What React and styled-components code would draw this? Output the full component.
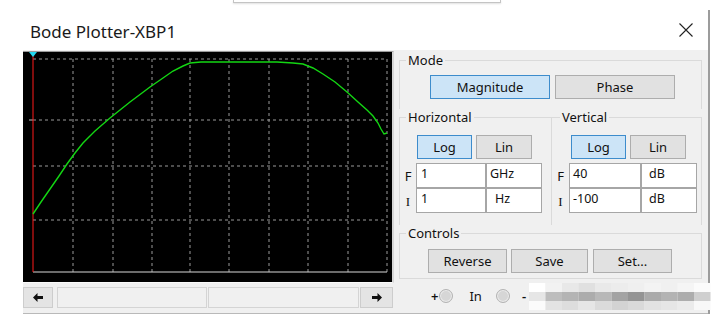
import styled, { createGlobalStyle } from "styled-components";

const Global = createGlobalStyle`
  body {
    margin: 0;
    background: #fff;
    font-family: "Noto Sans", "Open Sans", sans-serif;
  }
`;

const Page = styled.div`
  width: 715px;
  height: 322px;
  overflow: hidden;
  background: #fff;
`;

const TopStrip = styled.div`
  height: 10px;
`;

const OtherWindow = styled.div`
  margin-left: 233px;
  width: 266px;
  height: 2px;
  border: 1px solid #c4c4c4;
  border-top: none;
  box-shadow: 0 1px 2px rgba(0, 0, 0, 0.12);
`;

const Window = styled.div`
  width: 708px;
  border-right: 2px solid #9c9c9c;
`;

const TitleBar = styled.div`
  height: 40px;
  display: flex;
  align-items: center;
  justify-content: space-between;
  padding: 0 15px 0 30px;
`;

const Title = styled.div`
  font-size: 17px;
  color: #1a1a1a;
  margin-top: 2px;
`;

const Client = styled.div`
  margin-left: 23px;
  height: 263px;
  background: #f0f0f0;
  border-bottom: 1px solid #b9b9b9;
  display: flex;
`;

const LeftCol = styled.div`
  width: 371px;
  padding-top: 1px;
`;

const Screen = styled.div`
  height: 230px;
  background: #000;
  border-top: 1px solid #9a9a9a;
  border-right: 2px solid #d6d6d6;
  border-bottom: 1px solid #fafafa;
`;

const ScrollRow = styled.div`
  margin-top: 4px;
  height: 21px;
  display: flex;
`;

const ArrowBtn = styled.div`
  width: ${(p) => p.$w}px;
  margin-left: ${(p) => p.$ml || 0}px;
  background: #e4e4e4;
  border: 1px solid #cdcdcd;
  box-sizing: border-box;
  display: flex;
  align-items: center;
  justify-content: center;
`;

const Track = styled.div`
  width: ${(p) => p.$w}px;
  margin-left: ${(p) => p.$ml}px;
  background: #f0f0f0;
  border: 1px solid #d4d4d4;
  box-sizing: border-box;
`;

const RightPanel = styled.div`
  flex: 1;
  min-width: 0;
  padding: 2px 6px 0 5px;
  display: flex;
  flex-direction: column;
`;

const Group = styled.fieldset`
  margin: 0;
  padding: 0;
  min-inline-size: 0;
  box-sizing: border-box;
  flex: ${(p) => (p.$grow ? "1 1 0" : "none")};
  height: ${(p) => p.$h}px;
  width: ${(p) => (p.$w ? `${p.$w}px` : "auto")};
  border: 1px solid #dadada;
  border-bottom: ${(p) => (p.$closed ? "1px solid #dadada" : "none")};
  border-left: ${(p) => (p.$noLeft ? "none" : "1px solid #dadada")};
  border-right: ${(p) => (p.$noRight ? "none" : "1px solid #dadada")};
`;

const Legend = styled.legend`
  font-size: 13px;
  line-height: 16px;
  padding: 0 2px;
  margin-left: ${(p) => p.$ml}px;
  color: #111;
`;

const GroupRow = styled.div`
  display: flex;
  flex: none;
`;

const BtnRow = styled.div`
  display: flex;
  gap: ${(p) => p.$gap}px;
  margin-top: ${(p) => p.$mt}px;
  padding-left: ${(p) => p.$pl}px;
`;

const Btn = styled.div`
  width: ${(p) => p.$w}px;
  height: 24px;
  box-sizing: border-box;
  display: flex;
  align-items: center;
  justify-content: center;
  font-size: 13px;
  color: #111;
  background: ${(p) => (p.$on ? "#cce4f7" : "#e1e1e1")};
  border: 1px solid ${(p) => (p.$on ? "#3d8ccc" : "#adadad")};
`;

const Fields = styled.div`
  margin-top: 4px;
  display: grid;
  grid-template-columns: ${(p) => p.$cols};
`;

const FieldLabel = styled.div`
  height: 25px;
  display: flex;
  align-items: center;
  justify-content: center;
  font-size: 13px;
  padding-top: ${(p) => (p.$serif ? 3 : 1)}px;
  box-sizing: border-box;
  font-family: ${(p) => (p.$serif ? '"Liberation Serif", serif' : "inherit")};
  color: #111;
`;

const Box = styled.div`
  height: 25px;
  box-sizing: border-box;
  background: #fff;
  border: 1px solid #a6a6a6;
  font-size: 12.5px;
  line-height: 16px;
  padding: 2px 0 0 ${(p) => p.$pl}px;
  color: #111;
`;

const BottomRow = styled.div`
  flex: 1;
  display: flex;
  align-items: center;
  padding-left: 32px;
  font-size: 13px;
  color: #111;
  & > * {
    flex: none;
  }
`;

const Sign = styled.span`
  font-weight: 600;
`;

const Radio = styled.div`
  width: 14px;
  height: 14px;
  border-radius: 50%;
  box-sizing: border-box;
  border: 1px solid #b4b4b4;
  background: #d6d6d6;
  box-shadow: inset 0 0 0 1px #ececec;
  margin: 0 ${(p) => p.$mr}px 0 ${(p) => p.$ml}px;
`;

const grid = [50, 90, 129, 167, 206, 246, 285, 325, 364];
const rows = [7, 68, 114, 168];
const curve =
  "10,162 18,150 27,137 36,124 44,112 52,101 60,91 72,79 87,66 107,50 127,35 140,26 150,19 160,14 167,11 178,10 190,10 254,10 270,11 280,12 290,16 300,22 312,30 324,40 335,50 344,58 350,64 355,71 358,77 361,82 364,81";

function Plot() {
  return (
    <svg width="368" height="229" style={{ display: "block" }}>
      {grid.map((x) => (
        <line key={x} x1={x} y1={7} x2={x} y2={220} stroke="#9a9a9a" strokeDasharray="3 3" />
      ))}
      {rows.map((y) => (
        <line key={y} x1={10} y1={y} x2={364} y2={y} stroke="#9a9a9a" strokeDasharray="3 3" />
      ))}
      <line x1={6} y1={68} x2={10} y2={68} stroke="#c0c0c0" />
      <line x1={10} y1={220} x2={364} y2={220} stroke="#d8d8d8" />
      <line x1={10} y1={2} x2={10} y2={220} stroke="#ff1a1a" />
      <polyline points={curve} fill="none" stroke="#13d613" strokeWidth="1.4" />
      <polygon points="6,0 14,0 10,5" fill="#22d8f0" />
    </svg>
  );
}

function Arrow({ dir }) {
  return (
    <svg width="10" height="9" viewBox="0 0 10 9">
      <path
        d="M0 4.5 L4.5 0 L4.5 3 L10 3 L10 6 L4.5 6 L4.5 9 Z"
        fill="#111"
        transform={dir === "right" ? "translate(10,0) scale(-1,1)" : undefined}
      />
    </svg>
  );
}

const mosaic = [
  ["#fff", "#f2f2f2", "#e8e8e8", "#e0e0e0", "#e9e9e9", "#ececec", "#efefef", "#f3f3f3", "#f0f0f0", "#f5f5f5", "#fbfbfb"],
  ["#e6e6e6", "#bdbdbd", "#b4b4b4", "#acacac", "#b8b8b8", "#a3a3a3", "#949494", "#aaaaaa", "#b3b3b3", "#adadad", "#cfcfcf"],
  ["#fbfbfb", "#e3e3e3", "#dddddd", "#e6e6e6", "#dbdbdb", "#d3d3d3", "#d9d9d9", "#e2e2e2", "#e6e6e6", "#ebebeb", "#f8f8f8"],
];

function Blur() {
  return (
    <svg width="182" height="27" style={{ display: "block", marginLeft: "3px" }}>
      {mosaic.map((r, i) =>
        r.map((c, j) => <rect key={`${i}-${j}`} x={j * 16.5} y={i * 9} width="16.5" height="9" fill={c} />)
      )}
    </svg>
  );
}

export default function App() {
  return (
    <Page>
      <Global />
      <TopStrip>
        <OtherWindow />
      </TopStrip>
      <Window>
        <TitleBar>
          <Title>Bode Plotter-XBP1</Title>
          <svg width="14" height="14" viewBox="0 0 14 14">
            <path d="M0.5 0.5 L13.5 13.5 M13.5 0.5 L0.5 13.5" stroke="#222" strokeWidth="1.1" />
          </svg>
        </TitleBar>
        <Client>
          <LeftCol>
            <Screen>
              <Plot />
            </Screen>
            <ScrollRow>
              <ArrowBtn $w={30}>
                <Arrow dir="left" />
              </ArrowBtn>
              <Track $w={150} $ml={4} />
              <Track $w={151} $ml={1} />
              <ArrowBtn $w={33} $ml={1}>
                <Arrow dir="right" />
              </ArrowBtn>
            </ScrollRow>
          </LeftCol>
          <RightPanel>
            <Group $h={57}>
              <Legend $ml={6}>Mode</Legend>
              <BtnRow $gap={5} $mt={7} $pl={30}>
                <Btn $w={120} $on>
                  Magnitude
                </Btn>
                <Btn $w={120}>Phase</Btn>
              </BtnRow>
            </Group>
            <GroupRow>
              <Group $h={116} $w={153}>
                <Legend $ml={6}>Horizontal</Legend>
                <BtnRow $gap={4} $mt={10} $pl={17}>
                  <Btn $w={55} $on>
                    Log
                  </Btn>
                  <Btn $w={56}>Lin</Btn>
                </BtnRow>
                <Fields $cols="16px 70px 56px">
                  <FieldLabel>F</FieldLabel>
                  <Box $pl={4}>1</Box>
                  <Box $pl={3}>GHz</Box>
                  <FieldLabel $serif>I</FieldLabel>
                  <Box $pl={4}>1</Box>
                  <Box $pl={8}>Hz</Box>
                </Fields>
              </Group>
              <Group $h={116} $grow $noLeft>
                <Legend $ml={8}>Vertical</Legend>
                <BtnRow $gap={4} $mt={10} $pl={19}>
                  <Btn $w={55} $on>
                    Log
                  </Btn>
                  <Btn $w={56}>Lin</Btn>
                </BtnRow>
                <Fields $cols="17px 72px 56px">
                  <FieldLabel>F</FieldLabel>
                  <Box $pl={3}>40</Box>
                  <Box $pl={7}>dB</Box>
                  <FieldLabel $serif>I</FieldLabel>
                  <Box $pl={3}>-100</Box>
                  <Box $pl={7}>dB</Box>
                </Fields>
              </Group>
            </GroupRow>
            <Group $h={54} $closed>
              <Legend $ml={6}>Controls</Legend>
              <BtnRow $gap={4} $mt={8} $pl={28}>
                <Btn $w={79}>Reverse</Btn>
                <Btn $w={77}>Save</Btn>
                <Btn $w={79} style={{ marginLeft: "1px" }}>
                  Set...
                </Btn>
              </BtnRow>
            </Group>
            <BottomRow>
              <Sign>+</Sign>
              <Radio $ml={1} $mr={16} />
              <span>In</span>
              <Radio $ml={14} $mr={12} />
              <Sign>-</Sign>
              <Blur />
            </BottomRow>
          </RightPanel>
        </Client>
      </Window>
    </Page>
  );
}
